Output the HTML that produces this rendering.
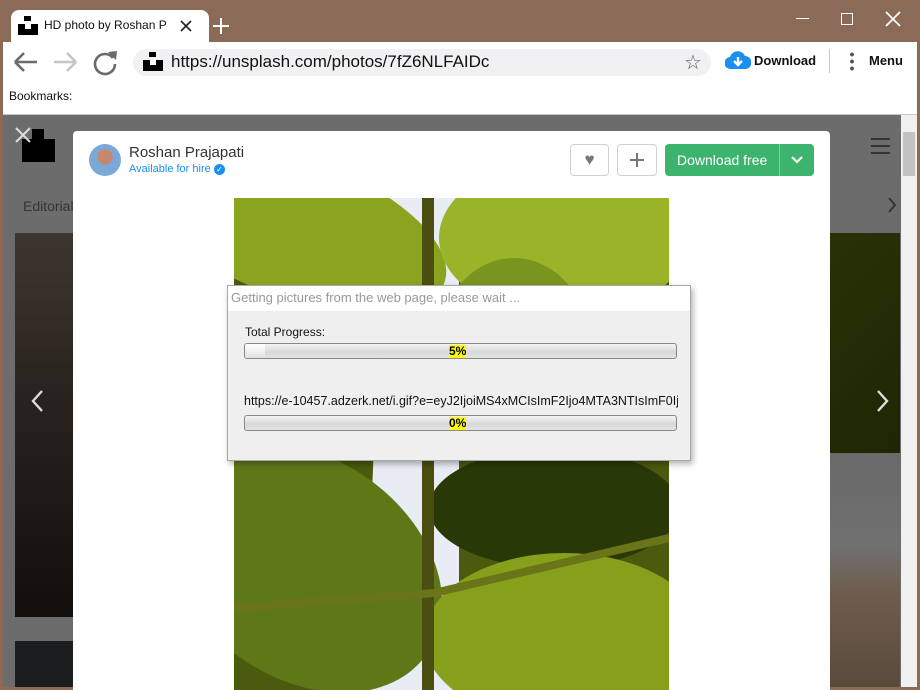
<!DOCTYPE html>
<html><head><meta charset="utf-8"><style>
*{margin:0;padding:0;box-sizing:border-box}
body{width:920px;height:690px;background:#8b6b57;position:relative;overflow:hidden;font-family:"Liberation Sans",sans-serif}
.a{position:absolute}
</style></head><body>
<!-- tab -->
<div class="a" style="left:11px;top:10px;width:198px;height:33px;background:#fff;border-radius:8px 8px 0 0"></div>
<svg class="a" style="left:18px;top:16px" width="20" height="20"><rect x="6" y="0" width="7" height="5" fill="#000"/><rect x="0" y="8" width="20" height="11" fill="#000"/><rect x="7" y="8" width="6" height="5" fill="#fff"/></svg>
<div class="a" style="left:44px;top:18px;font-size:12px;color:#111">HD photo by Roshan P</div>
<svg class="a" style="left:180px;top:20px" width="12" height="12"><path d="M1 1L11 11M11 1L1 11" stroke="#222" stroke-width="1.6"/></svg>
<svg class="a" style="left:213px;top:18px" width="16" height="16"><path d="M8 0V16M0 8H16" stroke="#fff" stroke-width="2"/></svg>
<div class="a" style="left:796px;top:18px;width:13px;height:1px;background:#fff"></div>
<div class="a" style="left:841px;top:13px;width:12px;height:12px;border:1.5px solid #fff"></div>
<svg class="a" style="left:885px;top:11px" width="16" height="16"><path d="M1 1L15 15M15 1L1 15" stroke="#fff" stroke-width="1.8"/></svg>
<!-- toolbar -->
<div class="a" style="left:3px;top:42px;width:914px;height:73px;background:#fff;border-bottom:1px solid #c8c8c8"></div>
<svg class="a" style="left:0px;top:48px" width="130" height="28"><path d="M15 14H37M15 14L24 5M15 14L24 23" stroke="#6a6a6a" stroke-width="2.6" fill="none"/><path d="M54 14H76M76 14L67 5M76 14L67 23" stroke="#c6c6c6" stroke-width="2.6" fill="none"/><path d="M113 10A10 10 0 1 0 115 16" stroke="#6a6a6a" stroke-width="2.6" fill="none"/><path d="M108 4L117 3L116 12Z" fill="#6a6a6a"/></svg>
<div class="a" style="left:133px;top:49px;width:578px;height:27px;background:#f1f1f3;border-radius:14px"></div>
<svg class="a" style="left:143px;top:52px" width="20" height="20"><rect x="6" y="0" width="7" height="5" fill="#000"/><rect x="0" y="8" width="20" height="11" fill="#000"/><rect x="7" y="8" width="6" height="5" fill="#fff"/></svg>
<div class="a" style="left:171px;top:52px;font-size:17px;color:#111">https://unsplash.com/photos/7fZ6NLFAIDc</div>
<div class="a" style="left:684px;top:50px;font-size:20px;color:#555">☆</div>
<svg class="a" style="left:725px;top:49px" width="26" height="22"><path d="M6 20A6 6 0 0 1 5 8A8 8 0 0 1 20 7A6 6 0 0 1 20 20Z" fill="#1a8ff0"/><path d="M13 8V16M9 12L13 16L17 12" stroke="#fff" stroke-width="2.4" fill="none"/></svg>
<div class="a" style="left:754px;top:53px;font-size:13px;font-weight:bold;color:#111">Download</div>
<div class="a" style="left:829px;top:49px;width:1px;height:24px;background:#ccc"></div>
<div class="a" style="left:850px;top:51px;width:4px;height:20px;background:radial-gradient(circle,#555 1.8px,transparent 2px) 0 0/4px 7px"></div>
<div class="a" style="left:869px;top:53px;font-size:13px;font-weight:bold;color:#111">Menu</div>
<div class="a" style="left:9px;top:89px;font-size:12px;color:#111">Bookmarks:</div>
<!-- page -->
<div class="a" style="left:3px;top:115px;width:898px;height:572px;background:#6c6c6c"></div>
<div class="a" style="left:901px;top:115px;width:16px;height:572px;background:#f0f0f0"></div>
<div class="a" style="left:903px;top:132px;width:12px;height:44px;background:#c2c2c2"></div>
<div class="a" style="left:15px;top:233px;width:58px;height:384px;background:linear-gradient(#3d3630,#2a2420 40%,#120e0c)"></div>
<div class="a" style="left:15px;top:641px;width:58px;height:46px;background:#1c1d1e"></div>
<div class="a" style="left:22px;top:129px;width:33px;height:33px;background:#000;clip-path:polygon(10px 0,22px 0,22px 10px,33px 10px,33px 33px,0 33px,0 10px,10px 10px)"></div>
<svg class="a" style="left:15px;top:127px" width="16" height="16"><path d="M1 1L15 15M15 1L1 15" stroke="#ddd" stroke-width="2"/></svg>
<div class="a" style="left:23px;top:198px;font-size:14px;color:#333">Editorial</div>
<div class="a" style="left:830px;top:233px;width:70px;height:220px;background:linear-gradient(135deg,#283206,#1e2604)"></div>
<div class="a" style="left:830px;top:453px;width:70px;height:234px;background:linear-gradient(#6a6a6a,#707070 40%,#6e5d4c 60%,#5a4a3c)"></div>
<div class="a" style="left:871px;top:138px;width:19px"><div style="height:2px;background:#333;margin-bottom:5px"></div><div style="height:2px;background:#333;margin-bottom:5px"></div><div style="height:2px;background:#333"></div></div>
<svg class="a" style="left:887px;top:197px" width="10" height="16"><path d="M2 1L8 8L2 15" stroke="#333" stroke-width="2" fill="none"/></svg>
<svg class="a" style="left:30px;top:389px" width="14" height="24"><path d="M12 2L3 12L12 22" stroke="#ddd" stroke-width="2.4" fill="none"/></svg>
<svg class="a" style="left:876px;top:389px" width="14" height="24"><path d="M2 2L11 12L2 22" stroke="#ddd" stroke-width="2.4" fill="none"/></svg>
<!-- modal -->
<div class="a" style="left:73px;top:131px;width:757px;height:559px;background:#fff;border-radius:4px 4px 0 0"></div>
<div class="a" style="left:89px;top:144px;width:32px;height:32px;border-radius:50%;background:radial-gradient(circle at 50% 40%,#c58a6e 30%,#7aa8d8 32%)"></div>
<div class="a" style="left:129px;top:144px;font-size:15px;color:#333">Roshan Prajapati</div>
<div class="a" style="left:129px;top:163px;font-size:11px;color:#1a8ff0">Available for hire <span style="display:inline-block;width:11px;height:11px;border-radius:50%;background:#1a8ff0;color:#fff;font-size:8px;text-align:center;line-height:11px">✓</span></div>
<div class="a" style="left:570px;top:144px;width:39px;height:32px;border:1px solid #d0d0d0;border-radius:4px;color:#777;font-size:17px;text-align:center;line-height:29px">♥</div>
<div class="a" style="left:617px;top:144px;width:40px;height:32px;border:1px solid #d0d0d0;border-radius:4px"></div>
<svg class="a" style="left:629px;top:152px" width="16" height="16"><path d="M8 1V15M1 8H15" stroke="#777" stroke-width="2"/></svg>
<div class="a" style="left:665px;top:144px;width:149px;height:32px;background:#3cb46e;border-radius:4px"></div>
<div class="a" style="left:779px;top:144px;width:1px;height:32px;background:#7dd3a0"></div>
<div class="a" style="left:677px;top:152px;font-size:14px;color:#fff">Download free</div>
<svg class="a" style="left:790px;top:155px" width="14" height="10"><path d="M2 2L7 7L12 2" stroke="#fff" stroke-width="2.2" fill="none"/></svg>
<!-- photo -->
<svg class="a" style="left:234px;top:198px" width="435" height="492" viewBox="0 0 435 492">
<rect width="435" height="492" fill="#4a5a0e"/>
<path d="M150 0H225V492H130Z" fill="#e8ecf4"/>
<ellipse cx="60" cy="30" rx="160" ry="70" fill="#8aa420" transform="rotate(20 60 30)"/>
<ellipse cx="330" cy="40" rx="125" ry="80" fill="#9ab42a"/>
<ellipse cx="70" cy="370" rx="150" ry="110" fill="#5e7818" transform="rotate(35 70 370)"/>
<ellipse cx="320" cy="310" rx="125" ry="60" fill="#283806"/>
<ellipse cx="330" cy="440" rx="140" ry="85" fill="#86a01c"/>
<ellipse cx="90" cy="150" rx="130" ry="60" fill="#6a8418"/>
<ellipse cx="280" cy="160" rx="80" ry="100" fill="#7a9420"/>
<rect x="188" y="0" width="12" height="492" fill="#4a4e10"/>
<path d="M0 410L200 395L435 340" stroke="#6a7418" stroke-width="8" fill="none"/>
</svg>
<!-- dialog -->
<div class="a" style="left:227px;top:285px;width:464px;height:176px;background:#efefef;border:1px solid #a8a8a8;box-shadow:2px 3px 6px rgba(0,0,0,.3)"></div>
<div class="a" style="left:228px;top:286px;width:462px;height:25px;background:#fff"></div>
<div class="a" style="left:231px;top:290px;font-size:13px;color:#999">Getting pictures from the web page, please wait ...</div>
<div class="a" style="left:245px;top:325px;font-size:12px;color:#111">Total Progress:</div>
<div class="a" style="left:244px;top:343px;width:433px;height:16px;border:1px solid #888;border-radius:3px;background:linear-gradient(#f4f4f4,#d8d8d8 60%,#e4e4e4);overflow:hidden"><div style="width:20px;height:100%;background:linear-gradient(#fff,#dde2ea)"></div></div>
<div class="a" style="left:449px;top:345px;font-size:12px;font-weight:bold;color:#000;background:#ff0;line-height:13px">5%</div>
<div class="a" style="left:244px;top:394px;width:434px;font-size:12.5px;color:#111;white-space:nowrap;overflow:hidden">https://e-10457.adzerk.net/i.gif?e=eyJ2IjoiMS4xMCIsImF2Ijo4MTA3NTIsImF0Ijo</div>
<div class="a" style="left:244px;top:415px;width:433px;height:16px;border:1px solid #888;border-radius:3px;background:linear-gradient(#f4f4f4,#d8d8d8 60%,#e4e4e4)"></div>
<div class="a" style="left:449px;top:417px;font-size:12px;font-weight:bold;color:#000;background:#ff0;line-height:13px">0%</div>
</body></html>
